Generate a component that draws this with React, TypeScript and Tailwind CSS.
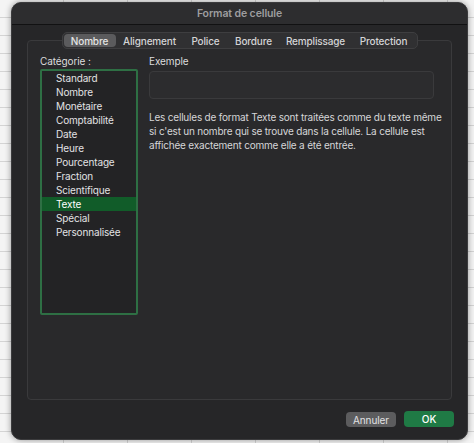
import { useState } from "react";

const tabs = [
  { label: "Nombre", w: "w-[52px]" },
  { label: "Alignement", w: "w-[68px]" },
  { label: "Police", w: "w-[44px]" },
  { label: "Bordure", w: "w-[52px]" },
  { label: "Remplissage", w: "w-[72px]" },
  { label: "Protection", w: "w-[64px]" },
];

const categories = [
  "Standard",
  "Nombre",
  "Monétaire",
  "Comptabilité",
  "Date",
  "Heure",
  "Pourcentage",
  "Fraction",
  "Scientifique",
  "Texte",
  "Spécial",
  "Personnalisée",
];

export default function App() {
  const [tab, setTab] = useState("Nombre");
  const [category, setCategory] = useState("Texte");

  return (
    <div
      className="w-[474px] h-[443px] overflow-hidden pl-[11px] pt-[2px] bg-[#f4f4f4] bg-[repeating-linear-gradient(to_bottom,transparent_0px,transparent_17px,#d4d4d4_17px,#d4d4d4_18px),repeating-linear-gradient(to_right,transparent_0px,transparent_63px,#d4d4d4_63px,#d4d4d4_64px)]"
      style={{ fontFamily: "Inter, 'Noto Sans', sans-serif" }}
    >
      <div className="w-[457px] h-[438px] rounded-[10px] bg-[#262628] border border-[#3b3b3d] flex flex-col overflow-hidden shadow-[0_0_6px_rgba(0,0,0,0.4)]">
        {/* Title bar */}
        <div className="h-[22px] shrink-0 bg-[#2d2d2f] border-b border-[#111112] flex items-center justify-center text-[10.5px] font-semibold tracking-[-0.1px] text-[#9d9d9f]">
          Format de cellule
        </div>

        <div className="flex-1 flex flex-col px-[15px] pt-[7px]">
          {/* Tabs */}
          <div className="relative z-10 flex justify-center">
            <div className="flex h-[17px] rounded-[5px] bg-[#303032] border border-[#3e3e40] p-px">
              {tabs.map((t) => (
                <button
                  key={t.label}
                  onClick={() => setTab(t.label)}
                  className={`${t.w} h-full rounded-[4px] text-[10px] font-medium tracking-[-0.15px] leading-none ${
                    tab === t.label
                      ? "bg-[#5b5b5d] text-[#e4e4e4]"
                      : "text-[#d4d4d6]"
                  }`}
                >
                  {t.label}
                </button>
              ))}
            </div>
          </div>

          {/* Group box */}
          <div className="-mt-[9px] h-[360px] rounded-[4px] border border-[#3a3a3c] bg-[#29292b] flex gap-[11px] pl-[12px] pt-[14px]">
            {/* Catégorie */}
            <div className="flex flex-col w-[98px]">
              <div className="h-[13px] text-[10px] tracking-[-0.1px] leading-[13px] text-[#dcdcde]">
                Catégorie :
              </div>
              <div className="mt-[1px] h-[246px] rounded-[2px] border-2 border-[#2e6f44] bg-[#232325] flex flex-col">
                {categories.map((c) => (
                  <div
                    key={c}
                    onClick={() => setCategory(c)}
                    className={`h-[14px] shrink-0 pl-[14px] text-[10px] tracking-[-0.15px] leading-[14px] ${
                      category === c
                        ? "bg-[#115c29] text-white"
                        : "text-[#e2e2e4]"
                    }`}
                  >
                    {c}
                  </div>
                ))}
              </div>
            </div>

            {/* Exemple */}
            <div className="flex flex-col w-[285px]">
              <div className="h-[13px] text-[10px] tracking-[-0.1px] leading-[13px] text-[#dcdcde]">
                Exemple
              </div>
              <div className="mt-[3px] h-[28px] rounded-[4px] border border-[#3a3a3c] bg-[#2c2c2e]" />
              <p className="mt-[11px] whitespace-nowrap text-[10px] tracking-[-0.2px] leading-[14px] text-[#d6d6d8]">
                Les cellules de format Texte sont traitées comme du texte même
                <br />
                si c'est un nombre qui se trouve dans la cellule. La cellule est
                <br />
                affichée exactement comme elle a été entrée.
              </p>
            </div>
          </div>

          {/* Buttons */}
          <div className="flex justify-end gap-[8px] mt-[12px]">
            <button className="w-[50px] h-[15px] rounded-[4px] bg-[#5c5c5e] text-[10px] tracking-[-0.1px] leading-none text-[#e2e2e4]">
              Annuler
            </button>
            <button className="w-[50px] h-[16px] -mt-[1px] mr-[-2px] rounded-[4px] bg-[#1f7a45] text-[10px] font-medium leading-none text-white">
              OK
            </button>
          </div>
        </div>
      </div>
    </div>
  );
}
